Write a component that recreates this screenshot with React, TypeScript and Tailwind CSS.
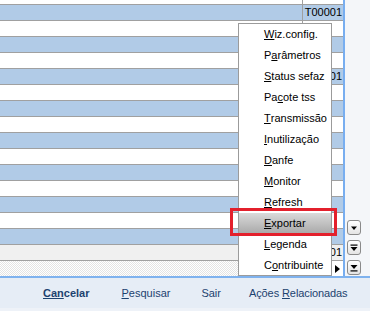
import React from "react";

const rows = Array.from({ length: 16 }, (_, i) => ({
  bg: i === 15 ? "bg-[#f0f0f0]" : i % 2 === 0 ? "bg-[#b1cbe7]" : "bg-white",
  code: i === 0 || i === 4 || i === 15 ? "T00001" : "",
}));

const menu: { pre: string; key: string; post: string }[] = [
  { pre: "", key: "W", post: "iz.config." },
  { pre: "P", key: "a", post: "râmetros" },
  { pre: "", key: "S", post: "tatus sefaz" },
  { pre: "Pa", key: "c", post: "ote tss" },
  { pre: "", key: "T", post: "ransmissão" },
  { pre: "", key: "I", post: "nutilização" },
  { pre: "", key: "D", post: "anfe" },
  { pre: "", key: "M", post: "onitor" },
  { pre: "", key: "R", post: "efresh" },
  { pre: "", key: "E", post: "xportar" },
  { pre: "", key: "L", post: "egenda" },
  { pre: "C", key: "o", post: "ntribuinte" },
];

function NavButton({ kind }: { kind: "down" | "page" | "end" }) {
  return (
    <div className="w-[14px] h-[15px] rounded-[3px] border border-[#8a8a8a] bg-gradient-to-b from-white to-[#e4e4e4] flex items-center justify-center">
      <svg width="8" height="8" viewBox="0 0 8 8">
        {kind === "page" && <rect x="0.5" y="0.5" width="7" height="1.2" fill="#000" />}
        <polygon
          points={kind === "page" ? "0.5,3 7.5,3 4,7" : kind === "end" ? "0.5,1 7.5,1 4,5" : "1,2.5 7,2.5 4,6"}
          fill="#000"
        />
        {kind === "end" && <rect x="0.5" y="6.3" width="7" height="1.2" fill="#000" />}
      </svg>
    </div>
  );
}

export default function App() {
  return (
    <div className="relative w-[370px] h-[311px] overflow-hidden bg-white font-['Liberation_Sans',Arial,sans-serif] text-[11px] text-black">
      <div className="flex h-[276px]">
        {/* Grid */}
        <div className="w-[345px] flex flex-col border-r-2 border-[#78aef0]">
          <div className="flex h-[4px]">
            <div className="w-[302px]" />
            <div className="flex-1 border-l border-[#a0a0a0]" />
          </div>
          {rows.map((r, i) => (
            <div key={i} className={`flex h-[16px] border-t border-[#a0a0a0] ${r.bg}`}>
              <div className="w-[302px]" />
              <div className="flex-1 border-l border-[#a0a0a0] text-right pr-[1px] leading-[15px]">{r.code}</div>
            </div>
          ))}
          <div className="flex h-[16px] border-t border-[#a0a0a0] bg-[repeating-conic-gradient(#e4e4e4_0%_25%,#ffffff_0%_50%)] bg-[length:2px_2px]">
            <div className="flex-1" />
            <div className="w-[12px] h-[15px] bg-white border-l border-[#8a8a8a] flex items-center justify-center">
              <svg width="5" height="8" viewBox="0 0 5 8">
                <polygon points="0,0 5,4 0,8" fill="#000" />
              </svg>
            </div>
          </div>
        </div>
        {/* Side buttons */}
        <div className="flex-1 bg-[#f4f6f9] flex flex-col items-start pl-[2px] pt-[220px] gap-[5px]">
          <NavButton kind="down" />
          <NavButton kind="page" />
          <NavButton kind="end" />
        </div>
      </div>

      {/* Footer */}
      <div className="h-[35px] border-t-2 border-[#7fb2ee] bg-[#e6edf6] flex flex-col">
        <div className="flex items-center h-[30px] text-[#1d426f]">
          <span className="ml-[43px] font-bold">
            <span className="underline">Can</span>celar
          </span>
          <span className="ml-[32px]">
            <span className="underline">P</span>esquisar
          </span>
          <span className="ml-[31px]">Sair</span>
          <span className="ml-[28px] tracking-[-0.1px]">
            Ações <span className="underline">R</span>elacionadas
          </span>
        </div>
        <div className="flex-1 bg-[#eef2f8]" />
      </div>

      {/* Popup menu */}
      <div className="absolute left-[238px] top-[23px] w-[94px] h-[253px] border border-[#9b9b9b] bg-white flex flex-col">
        {menu.map((m, i) => (
          <div
            key={i}
            className={`h-[21px] shrink-0 flex items-center pl-[25px] ${
              m.key === "E" ? "bg-gradient-to-b from-[#dadada] to-[#a8a8a8]" : ""
            }`}
          >
            {m.pre}
            <span className="underline">{m.key}</span>
            {m.post}
          </div>
        ))}
      </div>

      {/* Red highlight box */}
      <div className="absolute left-[230px] top-[208px] w-[107px] h-[28px] border-[3px] border-[#e3202c]" />
    </div>
  );
}
